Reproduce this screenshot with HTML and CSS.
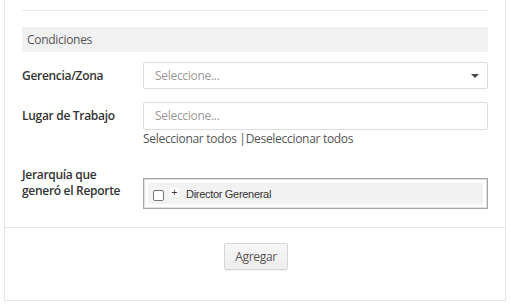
FILE: index.html
```html
<!DOCTYPE html>
<html lang="es">
<head>
    <meta charset="UTF-8">
    <meta name="viewport" content="width=device-width, initial-scale=1.0">
    <title>Condiciones</title>
    <link rel="stylesheet" href="styles.css">
</head>
<body>
    <div class="panel">
        <div class="panel-body">
            <hr class="divider">

            <div class="section-title">Condiciones</div>

            <!-- Gerencia -->
            <div class="row">
                <label class="row-label">Gerencia/Zona</label>
                <div class="field">
                    <div class="select">
                        <span class="placeholder">Seleccione...</span>
                        <span class="caret"></span>
                    </div>
                </div>
            </div>

            <!-- Lugar de trabajo -->
            <div class="row row-top">
                <label class="row-label label-input">Lugar de Trabajo</label>
                <div class="field">
                    <div class="input">
                        <span class="placeholder">Seleccione...</span>
                    </div>
                    <div class="links">Seleccionar todos |Deseleccionar todos</div>
                </div>
            </div>

            <!-- Jerarquia -->
            <div class="row row-top row-tree">
                <label class="row-label">Jerarquía que<br>generó el Reporte</label>
                <div class="field">
                    <div class="tree">
                        <div class="tree-node">
                            <span class="check"></span>
                            <span class="expand">+</span>
                            <span class="node-text">Director Gereneral</span>
                        </div>
                    </div>
                </div>
            </div>
        </div>

        <div class="panel-footer">
            <button class="btn">Agregar</button>
        </div>
    </div>
</body>
</html>
```

FILE: styles.css
```css
body {
    margin: 0;
    padding: 0;
    background-color: #fff;
    font-family: "Open Sans", Arial, sans-serif;
    font-size: 12px;
    letter-spacing: -0.3px;
    color: #333;
}

.panel {
    margin: 0 5px 0 4px;
    height: 301px;
    border: 1px solid #e6e6e6;
    border-top: none;
    box-sizing: border-box;
    display: flex;
    flex-direction: column;
}

.panel-body {
    padding: 10px 17px 18px 17px;
}

.divider {
    margin: 0;
    border: none;
    border-top: 1px solid #e6e6e6;
}

.section-title {
    margin-top: 16px;
    height: 25px;
    line-height: 26px;
    padding-left: 5px;
    background-color: #f1f1f1;
    color: #555;
}

.row {
    display: flex;
    align-items: center;
    margin-top: 10px;
}

.row-top {
    align-items: flex-start;
    margin-top: 13px;
}

.row-label {
    width: 121px;
    flex-shrink: 0;
    font-weight: 600;
    color: #333;
    line-height: 16px;
}

.label-input {
    padding-top: 6px;
}

.field {
    flex: 1;
}

.select, .input {
    position: relative;
    height: 27px;
    line-height: 25px;
    border: 1px solid #dcdcdc;
    border-radius: 2px;
    box-sizing: border-box;
    padding-left: 11px;
}

.input {
    height: 28px;
}

.placeholder {
    color: #999;
}

.caret {
    position: absolute;
    right: 8px;
    top: 11px;
    width: 0;
    height: 0;
    border-left: 4px solid transparent;
    border-right: 4px solid transparent;
    border-top: 4px solid #444;
}

.links {
    line-height: 18px;
    color: #555;
}

.row-tree {
    margin-top: 19px;
}

.tree {
    margin-top: 11px;
    border: 1px solid #a6a6a6;
    box-shadow: inset 0 0 0 1px #e0e0e0;
    padding: 4px;
}

.tree-node {
    height: 21px;
    background-color: #f2f2f2;
    display: flex;
    align-items: center;
    font-family: "Liberation Sans", Arial, sans-serif;
    font-size: 11px;
}

.check {
    width: 9px;
    height: 9px;
    margin-left: 5px;
    margin-top: 3px;
    border: 1px solid #777;
    border-radius: 2px;
    background-color: #fff;
}

.expand {
    width: 9px;
    height: 9px;
    margin-left: 6px;
    margin-top: -2px;
    background-color: #fff;
    font-size: 10px;
    letter-spacing: 0;
    line-height: 9px;
    text-align: center;
    color: #333;
}

.node-text {
    margin-left: 7px;
    color: #333;
}

.panel-footer {
    flex: 1;
    border-top: 1px solid #e6e6e6;
    display: flex;
    justify-content: center;
    align-items: flex-start;
    padding-top: 15px;
}

.btn {
    width: 64px;
    height: 27px;
    margin-left: 2px;
    font-family: "Open Sans", Arial, sans-serif;
    font-size: 12px;
    letter-spacing: -0.3px;
    color: #555;
    background: linear-gradient(#f7f7f7, #ededed);
    border: 1px solid #d6d6d6;
    border-radius: 2px;
    box-shadow: 0 1px 1px rgba(0, 0, 0, 0.06);
    cursor: pointer;
}
```
